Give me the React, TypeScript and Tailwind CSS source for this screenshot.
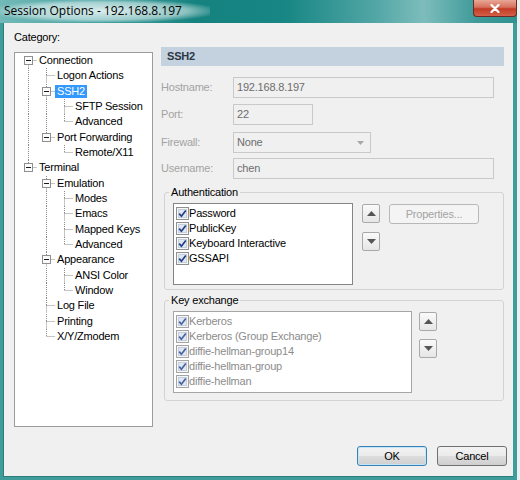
import React from 'react';

type TreeRow = {
  label: string;
  level: number;
  kids?: boolean;
  last?: boolean;
  first?: boolean;
  sel?: boolean;
  lines: boolean[];
};

const ROW_H = 15.33;

const tree: TreeRow[] = [
  { label: 'Connection', level: 0, kids: true, first: true, lines: [] },
  { label: 'Logon Actions', level: 1, lines: [true] },
  { label: 'SSH2', level: 1, kids: true, sel: true, lines: [true] },
  { label: 'SFTP Session', level: 2, lines: [true, true] },
  { label: 'Advanced', level: 2, last: true, lines: [true, true] },
  { label: 'Port Forwarding', level: 1, kids: true, last: true, lines: [true] },
  { label: 'Remote/X11', level: 2, last: true, lines: [true, false] },
  { label: 'Terminal', level: 0, kids: true, last: true, lines: [] },
  { label: 'Emulation', level: 1, kids: true, lines: [false] },
  { label: 'Modes', level: 2, lines: [false, true] },
  { label: 'Emacs', level: 2, lines: [false, true] },
  { label: 'Mapped Keys', level: 2, lines: [false, true] },
  { label: 'Advanced', level: 2, last: true, lines: [false, true] },
  { label: 'Appearance', level: 1, kids: true, lines: [false] },
  { label: 'ANSI Color', level: 2, lines: [false, true] },
  { label: 'Window', level: 2, last: true, lines: [false, true] },
  { label: 'Log File', level: 1, lines: [false] },
  { label: 'Printing', level: 1, lines: [false] },
  { label: 'X/Y/Zmodem', level: 1, last: true, lines: [false] },
];

const dot = { stroke: '#8a8a8a', strokeWidth: 1, strokeDasharray: '1 1' };

function TreeLines({ row }: { row: TreeRow }) {
  const w = 18 * (row.level + 1);
  const cx = 18 * row.level + 9.5;
  const cy = 7.5;
  return (
    <svg width={w} height={ROW_H} className="block shrink-0">
      {row.lines.map((on, i) =>
        on ? <line key={i} x1={18 * i + 9.5} y1={0} x2={18 * i + 9.5} y2={ROW_H} {...dot} /> : null
      )}
      {!row.first && <line x1={cx} y1={0} x2={cx} y2={cy} {...dot} />}
      {!row.last && <line x1={cx} y1={cy} x2={cx} y2={ROW_H} {...dot} />}
      <line x1={cx} y1={cy} x2={w} y2={cy} {...dot} />
      {row.kids && (
        <g>
          <rect x={cx - 4} y={cy - 4} width={8} height={8} fill="#fbfbfb" stroke="#8f8f8f" />
          <line x1={cx - 2.5} y1={cy} x2={cx + 2.5} y2={cy} stroke="#1a1a1a" />
        </g>
      )}
    </svg>
  );
}

function Check({ dim }: { dim?: boolean }) {
  return (
    <svg width={13} height={13} className="block shrink-0">
      <rect x={0.5} y={0.5} width={12} height={12} fill="#f6f6f6" stroke={dim ? '#a4a4a4' : '#8e8f8f'} />
      <rect x={2.5} y={2.5} width={8} height={8} fill="#dfe7f2" stroke="#c3cede" />
      <path d="M3.2 6.6 L5.4 9.2 L9.8 3.4" fill="none" stroke={dim ? '#4a64a0' : '#213f85'} strokeWidth={1.7} />
    </svg>
  );
}

function ArrowBtn({ down }: { down?: boolean }) {
  return (
    <div className="w-[18px] h-[19px] rounded-[2px] border border-[#a9a9a9] bg-[linear-gradient(to_bottom,#fafafa,#e6e6e6)] flex items-center justify-center">
      <svg width={9} height={5} className="block">
        <polygon points={down ? '0,0 9,0 4.5,5' : '0,5 9,5 4.5,0'} fill="#555" />
      </svg>
    </div>
  );
}

function ListItem({ label, dim }: { label: string; dim?: boolean }) {
  return (
    <div className="h-[15px] flex items-center">
      <Check dim={dim} />
      <span className={dim ? 'text-[#8c8c8c]' : 'text-black'}>{label}</span>
    </div>
  );
}

function Field({ label, value, width, top, combo }: { label: string; value: string; width: string; top: string; combo?: boolean }) {
  return (
    <div className={`flex items-center ${top}`}>
      <div className="w-[72px] text-[#a3a3a3]">{label}</div>
      <div className={`${width} h-[21px] border border-[#c9c9c9] bg-[#f0f0f0] pl-[3px] pr-[6px] flex items-center justify-between text-[#6d6d6d]`}>
        <span>{value}</span>
        {combo && (
          <svg width={7} height={4} className="block">
            <polygon points="0,0 7,0 3.5,4" fill="#a8a8a8" />
          </svg>
        )}
      </div>
    </div>
  );
}

const btn =
  'w-[70px] h-[20px] rounded-[3px] flex items-center justify-center text-black bg-[linear-gradient(to_bottom,#f2f2f2_0%,#ebebeb_50%,#dddddd_51%,#cfcfcf_100%)]';

export default function App() {
  return (
    <div className="w-[520px] h-[480px] bg-[#e9f1f1] flex font-['Liberation_Sans',Arial,sans-serif] text-[11px] tracking-[-0.2px] leading-[13px] text-black overflow-hidden">
      <div className="w-[517px] h-[480px] flex flex-col bg-[#3e9c9b]">
        {/* title bar */}
        <div className="h-[23px] flex items-start justify-between bg-[linear-gradient(90deg,#72b9b8_0%,#46a2a1_20%,#15827f_38%,#178684_55%,#4fa5a4_72%,#7dbdbc_82%,#3f9b9a_92%,#2f9291_100%)]">
          <div className="h-[22px] pl-[4px] pr-[28px] pt-[2px] bg-[radial-gradient(ellipse_at_center,rgba(255,255,255,0.8)_0%,rgba(255,255,255,0.5)_55%,rgba(255,255,255,0)_78%)]">
            <span className="font-['Open_Sans',sans-serif] text-[12px] leading-[17px] tracking-normal text-black">
              Session Options - 192.168.8.197
            </span>
          </div>
          <div className="w-[44px] h-[17px] rounded-b-[4px] border border-t-0 border-[#6b2a22] bg-[linear-gradient(to_bottom,#e9a797_0%,#d7705d_45%,#c23b24_55%,#d4604a_100%)] flex items-center justify-center">
            <svg width={10} height={9} className="block">
              <path d="M1.5 1 L8.5 8 M8.5 1 L1.5 8" stroke="#fff" strokeWidth={2.2} strokeLinecap="round" />
            </svg>
          </div>
        </div>

        <div className="flex-1 flex pl-[3px] pr-[4px] pb-[3px]">
          <div className="flex-1 bg-[#f0f0f0] border-l border-b border-[#2f7c7b] flex flex-col pl-[10px] pt-[8px]">
            <div className="flex items-start">
              {/* category tree */}
              <div className="flex flex-col w-[139px]">
                <div>Category:</div>
                <div className="mt-[8px] w-[139px] h-[375px] border border-[#9c9c9c] bg-white pl-[4px]">
                  {tree.map((r, i) => (
                    <div key={i} className="flex items-center h-[15.33px]">
                      <TreeLines row={r} />
                      <span className={`px-[2px] whitespace-nowrap ${r.sel ? 'bg-[#3399ff] text-white' : ''}`}>{r.label}</span>
                    </div>
                  ))}
                </div>
              </div>

              {/* settings panel */}
              <div className="ml-[8px] mt-[16px] w-[343px] flex flex-col">
                <div className="h-[19px] bg-[#c4d2df] pl-[6px] flex items-center font-bold text-[#2b3744]">SSH2</div>
                <Field label="Hostname:" value="192.168.8.197" width="w-[261px]" top="mt-[11px]" />
                <Field label="Port:" value="22" width="w-[80px]" top="mt-[6px]" />
                <Field label="Firewall:" value="None" width="w-[138px]" top="mt-[7px]" combo />
                <Field label="Username:" value="chen" width="w-[261px]" top="mt-[5px]" />

                <fieldset className="mt-[7px] ml-[3px] w-[340px] border border-[#d3d3d3] rounded-[3px] pl-[8px] pt-[4px] pb-[4px]">
                  <legend className="-ml-[4px] px-[2px]">Authentication</legend>
                  <div className="flex items-start">
                    <div className="w-[180px] h-[82px] border border-[#848484] bg-white pl-[2px] pt-[2px]">
                      <ListItem label="Password" />
                      <ListItem label="PublicKey" />
                      <ListItem label="Keyboard Interactive" />
                      <ListItem label="GSSAPI" />
                    </div>
                    <div className="ml-[9px] mt-[1px] flex flex-col gap-[9px]">
                      <ArrowBtn />
                      <ArrowBtn down />
                    </div>
                    <div className="ml-[9px] mt-[1px] w-[90px] h-[20px] rounded-[3px] border border-[#b8b8b8] bg-[#f4f4f4] flex items-center justify-center text-[#a3a3a3]">
                      Properties...
                    </div>
                  </div>
                </fieldset>

                <fieldset className="mt-[4px] ml-[3px] w-[340px] border border-[#d3d3d3] rounded-[3px] pl-[8px] pt-[4px] pb-[7px]">
                  <legend className="-ml-[4px] px-[2px]">Key exchange</legend>
                  <div className="flex items-start">
                    <div className="w-[239px] h-[82px] border border-[#a6a6a6] bg-white pl-[2px] pt-[2px]">
                      <ListItem label="Kerberos" dim />
                      <ListItem label="Kerberos (Group Exchange)" dim />
                      <ListItem label="diffie-hellman-group14" dim />
                      <ListItem label="diffie-hellman-group" dim />
                      <ListItem label="diffie-hellman" dim />
                    </div>
                    <div className="ml-[7px] mt-[1px] flex flex-col gap-[8px]">
                      <ArrowBtn />
                      <ArrowBtn down />
                    </div>
                  </div>
                </fieldset>
              </div>
            </div>

            {/* dialog buttons */}
            <div className="mt-[19px] flex justify-end gap-[10px] pr-[6px]">
              <div className={`${btn} border border-[#3c7fb1] shadow-[inset_0_0_0_1px_#c3e7fa]`}>OK</div>
              <div className={`${btn} border border-[#707070]`}>Cancel</div>
            </div>
          </div>
        </div>
      </div>
    </div>
  );
}
